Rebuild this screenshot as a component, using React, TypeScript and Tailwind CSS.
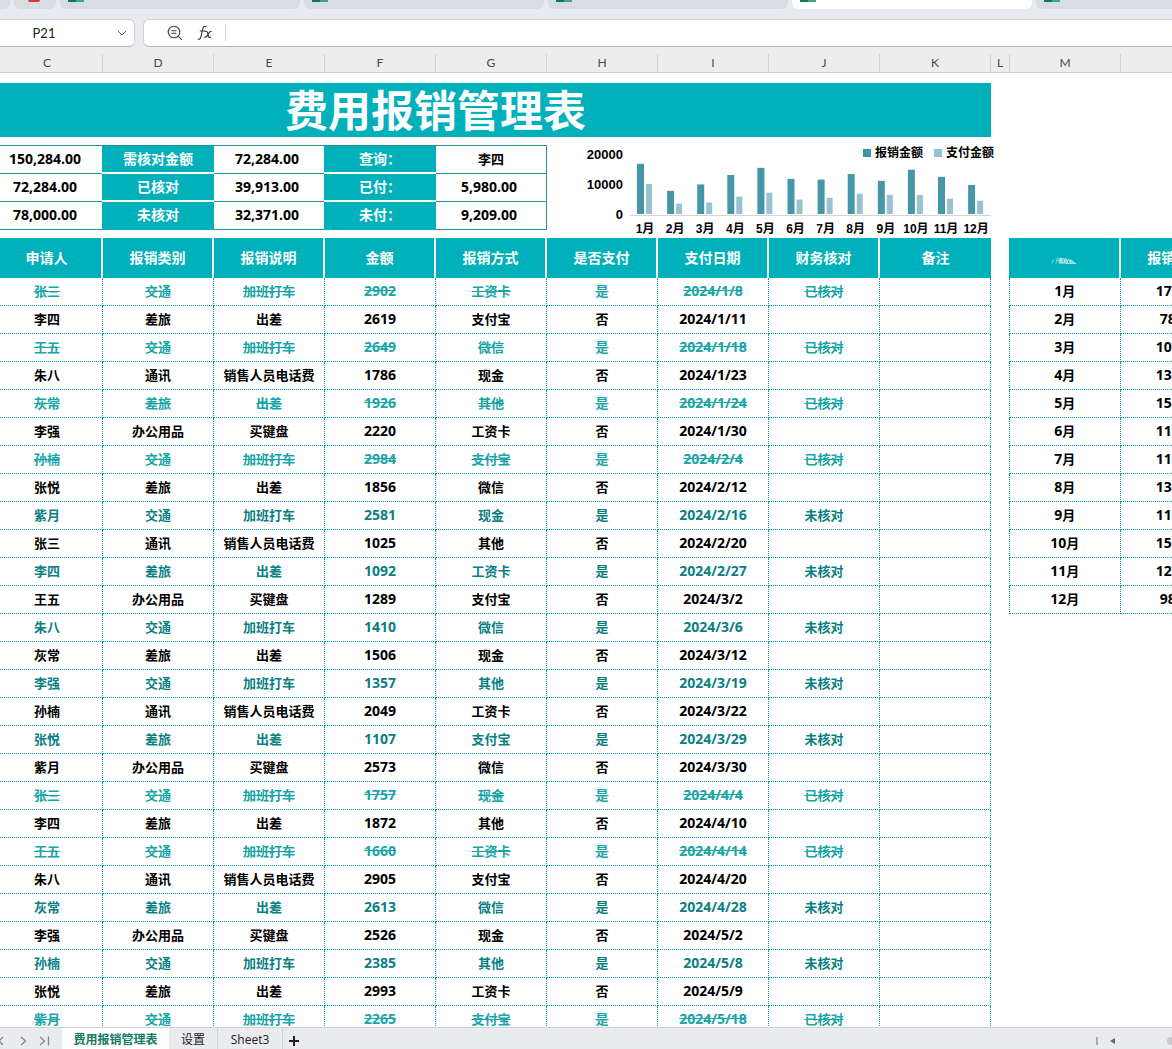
import React, { useState } from "react";

interface Expense {
  name: string;
  category: string;
  note: string;
  amount: number;
  method: string;
  paid: string;
  date: string;
  check: string;
}

const rows: [string, string, string, number, string, string, string, string][] = [
  ["张三", "交通", "加班打车", 2902, "工资卡", "是", "2024/1/8", "已核对"],
  ["李四", "差旅", "出差", 2619, "支付宝", "否", "2024/1/11", ""],
  ["王五", "交通", "加班打车", 2649, "微信", "是", "2024/1/18", "已核对"],
  ["朱八", "通讯", "销售人员电话费", 1786, "现金", "否", "2024/1/23", ""],
  ["灰常", "差旅", "出差", 1926, "其他", "是", "2024/1/24", "已核对"],
  ["李强", "办公用品", "买键盘", 2220, "工资卡", "否", "2024/1/30", ""],
  ["孙楠", "交通", "加班打车", 2984, "支付宝", "是", "2024/2/4", "已核对"],
  ["张悦", "差旅", "出差", 1856, "微信", "否", "2024/2/12", ""],
  ["紫月", "交通", "加班打车", 2581, "现金", "是", "2024/2/16", "未核对"],
  ["张三", "通讯", "销售人员电话费", 1025, "其他", "否", "2024/2/20", ""],
  ["李四", "差旅", "出差", 1092, "工资卡", "是", "2024/2/27", "未核对"],
  ["王五", "办公用品", "买键盘", 1289, "支付宝", "否", "2024/3/2", ""],
  ["朱八", "交通", "加班打车", 1410, "微信", "是", "2024/3/6", "未核对"],
  ["灰常", "差旅", "出差", 1506, "现金", "否", "2024/3/12", ""],
  ["李强", "交通", "加班打车", 1357, "其他", "是", "2024/3/19", "未核对"],
  ["孙楠", "通讯", "销售人员电话费", 2049, "工资卡", "否", "2024/3/22", ""],
  ["张悦", "差旅", "出差", 1107, "支付宝", "是", "2024/3/29", "未核对"],
  ["紫月", "办公用品", "买键盘", 2573, "微信", "否", "2024/3/30", ""],
  ["张三", "交通", "加班打车", 1757, "现金", "是", "2024/4/4", "已核对"],
  ["李四", "差旅", "出差", 1872, "其他", "否", "2024/4/10", ""],
  ["王五", "交通", "加班打车", 1660, "工资卡", "是", "2024/4/14", "已核对"],
  ["朱八", "通讯", "销售人员电话费", 2905, "支付宝", "否", "2024/4/20", ""],
  ["灰常", "差旅", "出差", 2613, "微信", "是", "2024/4/28", "未核对"],
  ["李强", "办公用品", "买键盘", 2526, "现金", "否", "2024/5/2", ""],
  ["孙楠", "交通", "加班打车", 2385, "其他", "是", "2024/5/8", "未核对"],
  ["张悦", "差旅", "出差", 2993, "工资卡", "否", "2024/5/9", ""],
  ["紫月", "交通", "加班打车", 2265, "支付宝", "是", "2024/5/18", "已核对"],
];

const expenses: Expense[] = rows.map(([name, category, note, amount, method, paid, date, check]) => ({
  name, category, note, amount, method, paid, date, check,
}));

const headers = ["申请人", "报销类别", "报销说明", "金额", "报销方式", "是否支付", "支付日期", "财务核对", "备注"];

const summary = [
  ["150,284.00", "需核对金额", "72,284.00", "查询：", "李四"],
  ["72,284.00", "已核对", "39,913.00", "已付：", "5,980.00"],
  ["78,000.00", "未核对", "32,371.00", "未付：", "9,209.00"],
];

// claimed / paid per month
const months = [
  { total: 17020, paid: 10200 },
  { total: 7850, paid: 3500 },
  { total: 10020, paid: 3900 },
  { total: 13220, paid: 5900 },
  { total: 15640, paid: 7200 },
  { total: 11900, paid: 4900 },
  { total: 11660, paid: 5500 },
  { total: 13550, paid: 6900 },
  { total: 11240, paid: 6500 },
  { total: 15000, paid: 6500 },
  { total: 12600, paid: 5200 },
  { total: 9860, paid: 4500 },
];

const rowStyle = (e: Expense) => {
  if (e.check === "已核对") return "text-[#16a5a8] line-through";
  if (e.check === "未核对") return "text-[#0a7f84]";
  return "text-black";
};

const cell = "h-7 p-0 pb-0.5 border-r border-b border-dotted border-r-[#00a3ad] border-b-[#00a3ad] text-center whitespace-nowrap";
const head = "h-10 p-0 border-r-2 border-white bg-[#00b0bb] text-white text-sm leading-5 font-bold text-center whitespace-nowrap";

const DocTab = ({ active }: { active?: boolean }) => (
  <button
    aria-label="工作簿"
    className={`flex h-[9px] w-60 shrink-0 items-start rounded-b-md pl-2 ${active ? "bg-white" : "bg-[#d9dce3]"}`}
  >
    <span className="h-[2px] w-2 bg-[#0d7a50]" />
    <span className="h-[2px] w-2 bg-[#3fa883]" />
  </button>
);

const ColumnHeads = () => (
  <div className="flex h-[26px] shrink-0 items-end overflow-hidden border-b border-[#cfcfcf] bg-[#ededed] font-[Lato,sans-serif] text-xs leading-[18px] text-[#4a4a4a]">
    <div className="w-[103px] shrink-0 border-r border-[#d2d2d2] pr-2 text-center">C</div>
    {["D", "E", "F", "G", "H", "I", "J", "K"].map((c) => (
      <div key={c} className="w-[111px] shrink-0 border-r border-[#d2d2d2] text-center">{c}</div>
    ))}
    <div className="w-[19px] shrink-0 border-r border-[#d2d2d2] text-center">L</div>
    <div className="w-[111px] shrink-0 border-r border-[#d2d2d2] text-center">M</div>
  </div>
);

const Chart = () => (
  <svg width="452" height="93" viewBox="0 0 452 93" className="shrink-0 overflow-visible font-['Liberation_Sans','Noto_Sans_CJK_SC',sans-serif] text-xs font-bold">
    <g className="text-[13px]" textAnchor="end">
      <text x="76" y="14">20000</text>
      <text x="76" y="44">10000</text>
      <text x="76" y="74">0</text>
    </g>
    <rect x="316" y="4" width="8" height="8" fill="#3f93a8" />
    <text x="328" y="12">报销金额</text>
    <rect x="387" y="4" width="8" height="8" fill="#94c3d4" />
    <text x="399" y="12">支付金额</text>
    {months.map((m, i) => (
      <g key={i}>
        <rect x={90 + i * 30.1} y={69 - m.total * 0.00295} width="7" height={m.total * 0.00295} fill="#4597a8" />
        <rect x={99 + i * 30.1} y={69 - m.paid * 0.00295} width="6" height={m.paid * 0.00295} fill="#98c2d2" />
        <text x={98 + i * 30.1} y="88" textAnchor="middle">{i + 1}月</text>
      </g>
    ))}
    <path d="M83 70.5H444" stroke="#d4d4d4" />
  </svg>
);

const Summary = () => (
  <table className="w-[547px] shrink-0 table-fixed border-separate border-spacing-0 border-t border-r border-[#2a9196] text-sm font-bold leading-5">
    <colgroup>
      <col className="w-[102px]" />
      <col className="w-[112px]" />
      <col className="w-[110px]" />
      <col className="w-[112px]" />
      <col />
    </colgroup>
    <tbody>
      {summary.map((r, i) => (
        <tr key={i} className="group">
          {r.map((v, j) =>
            j % 2 === 1 ? (
              <th key={j} scope="row" className="h-7 border-b-2 border-white bg-[#00b0bb] p-0 text-center text-white group-last:border-[#00b0bb]">{v}</th>
            ) : (
              <td key={j} className={`h-7 border-b border-[#2a9196] p-0 pb-0.5 text-center ${j === 0 ? "pr-3" : j === 2 ? "pr-1" : v === "李四" ? "text-[13px]" : "pr-1"}`}>
                {v}
              </td>
            )
          )}
        </tr>
      ))}
    </tbody>
  </table>
);

const ExpenseTable = () => (
  <table className="w-[991px] shrink-0 table-fixed border-separate border-spacing-0 text-[13px] font-bold leading-5">
    <colgroup>
      <col className="w-[103px]" />
      {headers.slice(1).map((h) => (
        <col key={h} className="w-[111px]" />
      ))}
    </colgroup>
    <thead>
      <tr>
        {headers.map((h, i) => (
          <th key={h} className={`${head} ${i === 0 ? "pr-2" : ""} last:border-r-0`}>{h}</th>
        ))}
      </tr>
    </thead>
    <tbody>
      {expenses.map((e) => (
        <tr key={e.date} className={rowStyle(e)}>
          <td className={`${cell} pr-2`}>{e.name}</td>
          <td className={cell}>{e.category}</td>
          <td className={cell}>{e.note}</td>
          <td className={`${cell} text-sm leading-5`}>{e.amount}</td>
          <td className={cell}>{e.method}</td>
          <td className={cell}>{e.paid}</td>
          <td className={`${cell} text-sm leading-5`}>{e.date}</td>
          <td className={cell}>{e.check}</td>
          <td className={cell}></td>
        </tr>
      ))}
    </tbody>
  </table>
);

const MonthTable = () => (
  <table className="w-[223px] shrink-0 table-fixed border-separate border-spacing-0 self-start text-[13px] font-bold leading-5">
    <thead>
      <tr>
        <th className={head} aria-label="月份">
          <svg width="28" height="12" viewBox="0 0 28 12" className="mx-auto mt-1">
            <path d="M2 9.500l1.500-4M6 9.500l1-5 4-.5-1 5.500M7 6.500h3" stroke="#c8eef0" strokeWidth="1" fill="none" opacity=".6" />
            <path d="M9 4.500L8 9.500h5l1-5.500zM14 4.500l-.5 5h5L17 4.500zM18 5.500l2 4h6l-4-3.500z" fill="#d8f4f5" opacity=".5" />
            <path d="M12 4l-1 5h3l1.500-4.500M16 5l2 4M18 5l3 4M20 5.500l4 3.500M15 9.500h11" stroke="#d8f4f5" strokeWidth="1" fill="none" opacity=".7" />
          </svg>
        </th>
        <th className={head}>报销金额</th>
      </tr>
    </thead>
    <tbody>
      {months.map((m, i) => (
        <tr key={i}>
          <td className={`${cell} border-l border-l-[#00a3ad]`}><span className="text-sm leading-5">{i + 1}</span>月</td>
          <td className={`${cell} text-sm leading-5`}>{m.total}</td>
        </tr>
      ))}
    </tbody>
  </table>
);

export default function App() {
  const [formula, setFormula] = useState("");
  const [cellRef, setCellRef] = useState("P21");

  return (
    <div className="flex h-screen flex-col overflow-hidden bg-white font-['Open_Sans','Noto_Sans_CJK_SC',sans-serif] text-black">
      {/* Workbook tabs */}
      <div className="flex h-[19px] shrink-0 gap-1 overflow-hidden bg-[#e7eaf1]">
        <div className="h-[9px] w-[10px] shrink-0 rounded-br-md bg-[#d9dce3]" />
        <button aria-label="首页" className="flex h-[9px] w-[42px] shrink-0 items-start rounded-b-md bg-[#d9dce3] pl-[14px]">
          <span className="h-[2px] w-3 rounded-b bg-[#d9363e]" />
        </button>
        <DocTab />
        <DocTab />
        <DocTab />
        <DocTab active />
        <DocTab />
      </div>

      {/* Name box + formula bar */}
      <div className="flex h-7 shrink-0 gap-2 bg-[#e9ebf0]">
        <div className="flex w-[135px] shrink-0 items-center rounded-r-md border border-l-0 border-[#cdd0d6] border-b-[#b4b6ba] bg-white">
          <input
            aria-label="名称框"
            value={cellRef}
            onChange={(e) => setCellRef(e.target.value)}
            className="w-[88px] min-w-0 bg-transparent pt-0.5 text-center font-[Lato,sans-serif] text-[13px] text-[#222] outline-none"
          />
          <button aria-label="展开" className="ml-auto mr-1.5">
            <svg width="12" height="12" viewBox="0 0 12 12" fill="none" stroke="#555" strokeWidth="1">
              <path d="M2 4l4 4 4-4" />
            </svg>
          </button>
        </div>
        <div className="flex min-w-0 flex-1 items-center rounded-l-md border border-r-0 border-[#cdd0d6] border-b-[#b4b6ba] bg-white pl-[23px]">
          <button aria-label="查找">
            <svg width="16" height="16" viewBox="0 0 16 16" fill="none" stroke="#3c3c3c" strokeWidth="1.1">
              <circle cx="7" cy="7" r="5.800" />
              <path d="M4.500 5.800h5M4.500 8.300h5M11.200 11.200l3.600 3.600" />
            </svg>
          </button>
          <button aria-label="插入函数" className="ml-3.5">
            <svg width="16" height="18" viewBox="0 0 16 18" fill="none" stroke="#333" strokeWidth="1.100" strokeLinecap="round">
              <path d="M8.800 2.600C7.400 1.900 6.300 2.600 5.900 4.300L3.700 13.500C3.400 15 2.300 15.500 1.200 15M3.300 7h4.800" />
              <path d="M8.300 7.500c1.500-.8 2.100.2 2.500 2l.6 2.400c.4 1.700 1.100 2 2.400 1.200M14.200 7.400c-1.200-.3-2 .8-2.900 2.300l-1.100 1.900c-.7 1.200-1.400 1.900-2.500 1.500" />
            </svg>
          </button>
          <input
            aria-label="编辑栏"
            value={formula}
            onChange={(e) => setFormula(e.target.value)}
            className="ml-3 h-4 min-w-0 flex-1 border-l border-[#ccd0dd] bg-transparent px-2 text-[13px] outline-none"
          />
        </div>
      </div>

      <ColumnHeads />

      {/* Sheet */}
      <main className="min-h-0 flex-1 overflow-hidden pt-2.5">
        <h1 className="h-[54px] w-[991px] bg-[#00b0bb] pr-[120px] text-center text-[43px] font-bold leading-[56px] text-white">
          费用报销管理表
        </h1>
        <div className="flex h-[101px] items-start pt-2">
          <Summary />
          <Chart />
        </div>
        <div className="flex gap-[18px]">
          <ExpenseTable />
          <MonthTable />
        </div>
      </main>

      {/* Sheet tabs */}
      <footer className="flex h-[22px] shrink-0 items-stretch overflow-hidden border-t border-[#d0d2d6] bg-[#e9ebef] text-xs leading-5 text-[#222]">
        <div className="flex w-[62px] shrink-0 items-center pt-1 text-[#888]">
          <button aria-label="上一个">
            <svg width="12" height="12" viewBox="0 0 12 12" fill="none" stroke="currentColor" strokeWidth="1.300"><path d="M3 2L-1 6l4 4" /></svg>
          </button>
          <button aria-label="下一个" className="ml-1.5">
            <svg width="12" height="12" viewBox="0 0 12 12" fill="none" stroke="currentColor" strokeWidth="1.300"><path d="M3 2l4.500 4L3 10" /></svg>
          </button>
          <button aria-label="最后一个" className="ml-2">
            <svg width="14" height="12" viewBox="0 0 14 12" fill="none" stroke="currentColor" strokeWidth="1.300"><path d="M2 2l4.500 4L2 10M10.500 1.500v9" /></svg>
          </button>
        </div>
        <button className="w-[107px] shrink-0 bg-white pt-0.5 font-bold text-[#127a62]">费用报销管理表</button>
        <button className="w-[49px] shrink-0 border-r border-[#cfd1d6] pt-0.5">设置</button>
        <button className="w-[65px] shrink-0 border-r border-[#cfd1d6] pt-0.5">Sheet3</button>
        <button aria-label="新建工作表" className="ml-1.5 flex items-center pt-1">
          <svg width="10" height="10" viewBox="0 0 10 10" stroke="#222" strokeWidth="2"><path d="M5 0v10M0 5h10" /></svg>
        </button>
        <div className="ml-auto flex items-center pt-1">
          <span className="h-2 w-[2px] bg-[#aaa]" />
          <button aria-label="向左滚动" className="ml-3">
            <svg width="5" height="6" viewBox="0 0 5 6" fill="#666"><path d="M5 0v6L0 3z" /></svg>
          </button>
          <span className="ml-[52px] h-2 w-[5px] rounded-l-full bg-[#c8c8ca]" />
        </div>
      </footer>
    </div>
  );
}
